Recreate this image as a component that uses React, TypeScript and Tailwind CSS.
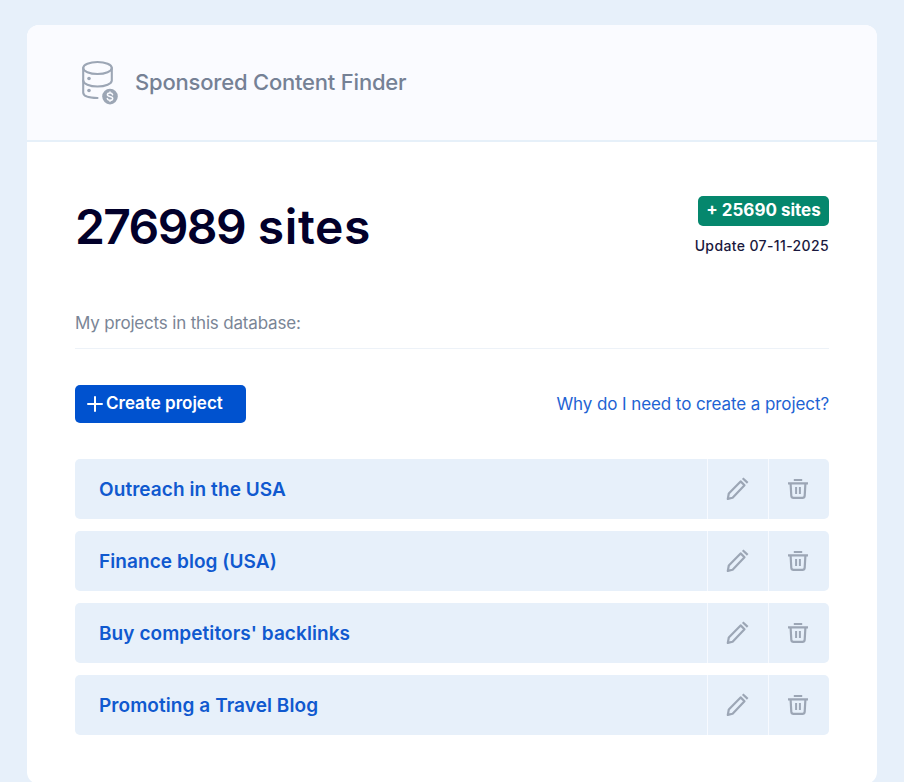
interface Project {
  id: number;
  name: string;
}

const projects: Project[] = [
  { id: 1, name: 'Outreach in the USA' },
  { id: 2, name: 'Finance blog (USA)' },
  { id: 3, name: "Buy competitors' backlinks" },
  { id: 4, name: 'Promoting a Travel Blog' },
];

function DatabaseIcon() {
  return (
    <svg width="38" height="45" viewBox="0 0 38 45" fill="none" stroke="#9ca6b5" strokeWidth="2.1" strokeLinecap="round">
      <ellipse cx="15.5" cy="8" rx="14.3" ry="6" />
      <path d="M1.2 8v24.5c0 3.3 5.6 5.4 14.3 5.5" />
      <path d="M29.8 8v12.5c0 3.3-6.4 6-14.3 6s-14.3-2.7-14.3-6" />
      <circle cx="7" cy="18.5" r="1.8" fill="#9ca6b5" stroke="none" />
      <circle cx="7" cy="30.5" r="1.8" fill="#9ca6b5" stroke="none" />
      <circle cx="28" cy="36.6" r="7.8" fill="#9ca6b5" stroke="none" />
      <path
        d="M30.6 34.7c-.3-1.1-1.3-1.6-2.6-1.6-1.5 0-2.6.6-2.6 1.7 0 2.5 5.3 1 5.3 3.6 0 1.1-1.2 1.8-2.7 1.8-1.4 0-2.5-.6-2.7-1.8M28 32v1M28 40.3v1"
        stroke="#fafbff"
        strokeWidth="1.5"
      />
    </svg>
  );
}

function PencilIcon() {
  return (
    <svg width="24" height="24" viewBox="0 0 24 24" fill="none" stroke="#9ca6b5" strokeWidth="2.2">
      <path d="M2.8 21.9l1-5.4L15.6 4.4l3.9 3.9L7.6 20.7z" strokeLinejoin="round" />
      <path d="M17.7 1.2l5 4.7" />
    </svg>
  );
}

function TrashIcon() {
  return (
    <svg width="22" height="22" viewBox="0 0 22 22" fill="none" stroke="#9ca6b5" strokeWidth="2.2">
      <path d="M6.8 2h8.4" />
      <path d="M1 5.4h20" />
      <path d="M3.6 5.5l.7 12.2c.1 1.4.9 2.2 2.3 2.2h8.8c1.4 0 2.2-.8 2.3-2.2l.7-12.2" />
      <path d="M9.1 9v7M12.9 9v7" strokeWidth="2" />
    </svg>
  );
}

function ProjectRow({ project }: { project: Project }) {
  return (
    <li className="flex h-[60px] overflow-hidden rounded-[5px] bg-[#e7f0fa]">
      <a className="flex flex-1 items-center pt-[2px] pl-6 text-[19px] font-semibold tracking-[0.07px] text-[#1059cf]">
        {project.name}
      </a>
      <button className="flex w-[61px] items-center justify-center border-l border-[#f7faff] pr-[2px]" aria-label="Edit">
        <PencilIcon />
      </button>
      <button className="flex w-[61px] items-center justify-center border-l border-[#f7faff] pr-[2px]" aria-label="Delete">
        <TrashIcon />
      </button>
    </li>
  );
}

export default function App() {
  return (
    <div className="h-[782px] overflow-hidden bg-[#e7f0fa] px-[27px] pt-[25px] font-['Inter',sans-serif]">
      <div className="h-[759px] w-[850px] overflow-hidden rounded-xl bg-white">
        <div className="flex h-[117px] items-center border-b-2 border-[#e6f0f9] bg-[#fafbff] pl-[55px]">
          <DatabaseIcon />
          <h2 className="ml-[15px] text-[22px] font-medium tracking-[-0.2px] text-[#758195]">Sponsored Content Finder</h2>
        </div>

        <div className="px-12">
          <div className="flex items-start justify-between pt-[54px]">
            <div className="mt-px text-[48px] leading-[60px] font-semibold text-[#02002a]">
              <span className="tracking-[-1.6px]">276989</span>
              <span className="tracking-[0.6px]"> sites</span>
            </div>
            <div className="flex flex-col items-end">
              <span className="flex h-[30px] w-[131px] items-center justify-center rounded-[5px] bg-[#05876d] text-[17px] font-bold text-white">
                + 25690 sites
              </span>
              <span className="mt-[10px] text-[14px] leading-5 font-medium tracking-[0.37px] text-[#19183d]">
                Update 07-11-2025
              </span>
            </div>
          </div>

          <div className="mt-[54px] flex h-[38px] border-b border-[#edf2f8] text-[17px] leading-6 tracking-[-0.18px] text-[#7a8596]">
            <span>My projects in this database:</span>
          </div>

          <div className="mt-9 flex items-center justify-between">
            <button className="flex h-[38px] w-[171px] items-center rounded-[5px] bg-[#0052cf] pl-3 text-[17px] font-semibold text-white">
              <svg width="16" height="16" viewBox="0 0 16 16" stroke="currentColor" strokeWidth="2" strokeLinecap="round">
                <path d="M8 1v14M1 8h14" />
              </svg>
              <span className="ml-[3px]">Create project</span>
            </button>
            <a className="pt-[2px] text-[17px] tracking-[-0.09px] text-[#1e63d3]">Why do I need to create a project?</a>
          </div>

          <ul className="mt-9 flex flex-col gap-3">
            {projects.map((project) => (
              <ProjectRow key={project.id} project={project} />
            ))}
          </ul>
        </div>
      </div>
    </div>
  );
}
